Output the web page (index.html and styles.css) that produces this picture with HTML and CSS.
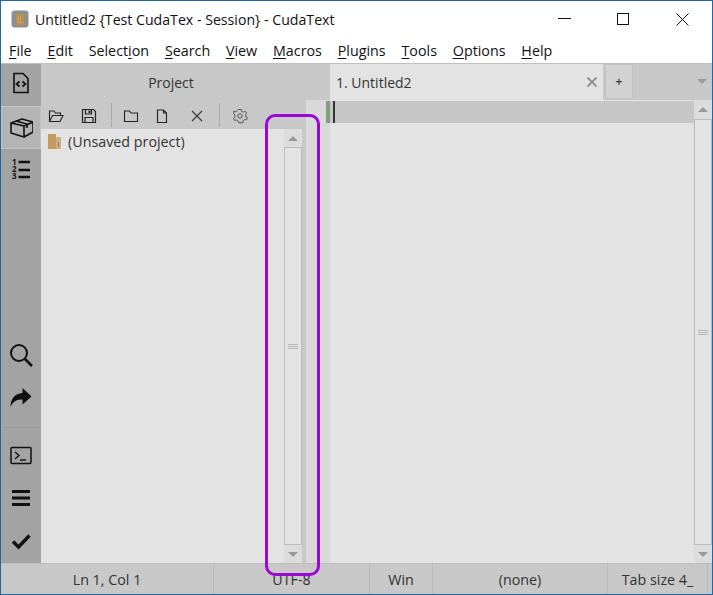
FILE: index.html
```
<!DOCTYPE html>
<html lang="en">
<head>
<meta charset="utf-8">
<title>CudaText</title>
<link rel="stylesheet" href="styles.css">
</head>
<body>
<div class="window">
  <header class="titlebar">
    <svg class="app-icon" width="18" height="18" viewBox="0 0 18 18"><rect x="0.5" y="0.5" width="17" height="17" rx="3" fill="#8f8f8f"/><rect x="5.500" y="4.500" width="7" height="10" fill="#a89170" stroke="#c8912f"/><path d="M7.500 6v6.500h3.500M9.500 6v4.500" fill="none" stroke="#e2a336"/></svg>
    <span class="title-text">Untitled2 {Test CudaTex - Session} - CudaText</span>
    <div class="win-controls">
      <button class="win-btn"><svg width="13" height="13" viewBox="0 0 13 13"><path d="M0 5.500h13" stroke="#111" fill="none"/></svg></button>
      <button class="win-btn"><svg width="13" height="13" viewBox="0 0 13 13"><rect x="0.500" y="0.500" width="11" height="11" stroke="#111" fill="none"/></svg></button>
      <button class="win-btn"><svg width="13" height="13" viewBox="0 0 13 13"><path d="M0.500 0.500l12 12M12.500 0.500l-12 12" stroke="#111" fill="none"/></svg></button>
    </div>
  </header>
  <nav class="menubar">
    <span class="menu-item"><u>F</u>ile</span>
    <span class="menu-item"><u>E</u>dit</span>
    <span class="menu-item">Select<u>i</u>on</span>
    <span class="menu-item"><u>S</u>earch</span>
    <span class="menu-item"><u>V</u>iew</span>
    <span class="menu-item"><u>M</u>acros</span>
    <span class="menu-item"><u>P</u>lugins</span>
    <span class="menu-item"><u>T</u>ools</span>
    <span class="menu-item"><u>O</u>ptions</span>
    <span class="menu-item"><u>H</u>elp</span>
  </nav>
  <main class="workspace">
    <aside class="sidebar">
      <div class="side-btn first"><svg width="24" height="24" viewBox="0 0 18 24"><path d="M2 2.500h9l5 5v14H2z" fill="none" stroke="#111" stroke-width="1.600"/><path d="M7.500 10.500L4.500 13l3 2.500M10.500 10.500l3 2.500-3 2.500" fill="none" stroke="#111" stroke-width="1.700"/></svg></div>
      <div class="side-btn active"><svg width="24" height="24" viewBox="0 0 24 24"><path d="M2 7l11-4 11 3-9 4z M2 7v10l13 4 9-5V6 M15 10v11" fill="none" stroke="#111" stroke-width="1.600" stroke-linejoin="round"/><path d="M7 5l11 3v4" fill="none" stroke="#111" stroke-width="1.600"/></svg></div>
      <div class="side-btn third"><svg width="24" height="24" viewBox="0 0 24 24"><text class="num" x="3" y="7.500">1</text><text class="num" x="3" y="14.800">2</text><text class="num" x="3" y="22">3</text><path d="M9.500 5h11.500M9.500 13h11.500M9.500 20h11.500" stroke="#111" stroke-width="2.600"/></svg></div>
      <div class="side-spacer"></div>
      <div class="side-btn"><svg width="24" height="24" viewBox="0 0 24 24"><circle cx="10" cy="10" r="8" fill="none" stroke="#111" stroke-width="2"/><path d="M16 16l7 7" stroke="#111" stroke-width="2.600"/></svg></div>
      <div class="side-btn lift"><svg width="24" height="24" viewBox="0 0 24 24"><path d="M13.500 3l9 8.500-9 8v-5C8 14.500 4 16 1.500 22c0-8 4-13.500 12-14z" fill="#111"/></svg></div>
      <div class="side-sep"></div>
      <div class="side-btn"><svg width="24" height="24" viewBox="0 0 24 20"><rect x="2" y="1.500" width="20" height="16" rx="1" fill="none" stroke="#111" stroke-width="1.500"/><path d="M6 6l4 3.500-4 3.500" fill="none" stroke="#111" stroke-width="1.400"/><path d="M11 14h6" stroke="#111" stroke-width="1.400"/></svg></div>
      <div class="side-btn lift"><svg width="24" height="24" viewBox="0 0 24 24"><path d="M3 5.500h18M3 12h18M3 18.500h18" stroke="#111" stroke-width="2.800"/></svg></div>
      <div class="side-btn lift"><svg width="24" height="24" viewBox="0 0 24 24"><path d="M4 12.500l5.500 5.500L20.500 6.500" fill="none" stroke="#111" stroke-width="3.400"/></svg></div>
    </aside>
    <section class="project">
      <div class="project-head">Project</div>
      <div class="project-tools">
        <span class="tool"><svg width="16" height="16" viewBox="0 0 16 16"><path d="M1.500 13.500V3h4.500l1.500 2h5v2.500M1.500 13.500h10.500l3-6H4.500z" fill="none" stroke="#222" stroke-width="1.100"/></svg></span>
        <span class="tool"><svg width="16" height="16" viewBox="0 0 16 16"><path d="M1.500 1.500h11l2 2v11h-13z" fill="none" stroke="#222" stroke-width="1.200"/><path d="M4.500 2v4h6V2M4 14.500V9.500h8v5" fill="none" stroke="#222" stroke-width="1.200"/><rect x="7.500" y="2.500" width="2" height="2.500" fill="#222"/></svg></span>
        <span class="tool-sep"></span>
        <span class="tool"><svg width="16" height="16" viewBox="0 0 16 16"><path d="M1.500 13.500V3h5l1.500 2h6.500v8.500z" fill="none" stroke="#222" stroke-width="1.100"/></svg></span>
        <span class="tool"><svg width="16" height="16" viewBox="0 0 16 16"><path d="M3.500 2h6l3 3v9.500h-9z M9.500 2v3h3" fill="none" stroke="#222" stroke-width="1.100"/></svg></span>
        <span class="tool"><svg width="16" height="16" viewBox="0 0 16 16"><path d="M3 3l10 10M13 3L3 13" fill="none" stroke="#333" stroke-width="1.100"/></svg></span>
        <span class="tool-sep"></span>
        <span class="tool"><svg width="16" height="16" viewBox="0 0 16 16"><circle cx="8" cy="8" r="2.200" fill="none" stroke="#555"/><path d="M6.700 1.500h2.600l.4 2 1.500.7 1.800-1 1.700 2-1.200 1.700.2 1.700 1.700 1-1 2.300-2-.3-1.300 1.200-.2 2H6.700l-.6-2-1.400-.9-2 .6-1.200-2.200 1.500-1.400V7l-1.500-1.500L1.700 3.300l2 .5 1.500-.9z" fill="none" stroke="#555"/></svg></span>
      </div>
      <div class="project-body">
        <div class="tree">
          <div class="tree-row">
            <svg width="13" height="15" viewBox="0 0 13 15"><rect x="0" y="0" width="8" height="15" fill="#c49a5c"/><rect x="8" y="3" width="5" height="12" fill="#cbb088"/><path d="M10.500 8v5" stroke="#9a7a48"/></svg>
            <span>(Unsaved project)</span>
          </div>
        </div>
        <div class="scrollbar">
          <div class="sb-btn"><span class="arrow up"></span></div>
          <div class="sb-thumb"><span class="grip"></span></div>
          <div class="sb-btn"><span class="arrow down"></span></div>
        </div>
        <div class="splitter"></div>
      </div>
    </section>
    <section class="editor">
      <div class="tabbar">
        <div class="tab-gap"></div>
        <div class="tab"><span>1. Untitled2</span><svg class="tab-close" width="10" height="10" viewBox="0 0 10 10"><path d="M0.500 0.500l9 9M9.500 0.500l-9 9" stroke="#8c8c8c" stroke-width="1.800"/></svg></div>
        <div class="tab-add">+</div>
        <div class="tab-fill"><span class="arrow down"></span></div>
      </div>
      <div class="edit-area">
        <div class="gutter"><span class="gutter-mark"></span></div>
        <div class="text-area"><div class="current-line"><span class="caret"></span></div></div>
        <div class="scrollbar">
          <div class="sb-btn tall"><span class="arrow up"></span></div>
          <div class="sb-thumb"><span class="grip"></span></div>
          <div class="sb-btn"><span class="arrow down"></span></div>
        </div>
      </div>
    </section>
  </main>
  <footer class="statusbar">
    <div class="cell c1">Ln 1, Col 1</div>
    <div class="cell c2">UTF-8</div>
    <div class="cell c3">Win</div>
    <div class="cell c4">(none)</div>
    <div class="cell c5">Tab size 4_</div>
  </footer>
  <div class="highlight"></div>
</div>
</body>
</html>
```
FILE: styles.css
```
* { box-sizing: border-box; }
html, body { margin: 0; padding: 0; }
body { width: 713px; height: 595px; overflow: hidden; font-family: "Open Sans", "Noto Sans", sans-serif; color: #1c1c1c; }
.window { position: relative; width: 713px; height: 595px; display: flex; flex-direction: column; background: #fff; border: 1px solid #1c69a6; }
.titlebar { height: 38px; flex: none; display: flex; align-items: center; padding: 0 0 2px 10px; font-size: 14.150px; color: #111; }
.app-icon { flex: none; margin-right: 6px; }
.title-text { white-space: nowrap; }
.win-controls { margin-left: auto; display: flex; height: 100%; }
.win-btn { width: 59px; border: 0; padding: 0; background: none; display: flex; align-items: center; justify-content: center; }
.menubar { height: 24px; flex: none; display: flex; align-items: center; gap: 15.800px; padding: 0 0 2px 8px; font-size: 14.300px; color: #111; background: #fff; }
.menu-item { white-space: nowrap; }
.menu-item u { text-underline-offset: 2px; }
.workspace { flex: 1; min-height: 0; display: flex; border-top: 1px solid #c0c0c0; }
.sidebar { width: 40px; flex: none; display: flex; flex-direction: column; background: #a3a3a3; }
.side-btn { height: 43px; flex: none; display: flex; align-items: center; justify-content: center; }
.side-btn.first { height: 42px; padding-bottom: 4px; }
.side-btn.third { padding-bottom: 3px; }
.side-btn.lift { padding-bottom: 2px; }
.side-btn.active { background: #b4b4b4; border: 1px solid #c2c2c2; }
.num { font-size: 8px; font-weight: 700; fill: #111; }
.side-spacer { flex: 1; }
.side-sep { height: 15px; flex: none; background: linear-gradient(#999, #999) no-repeat 2px 8px / 36px 1px; }
.project { width: 265px; flex: none; display: flex; flex-direction: column; background: #c8c8c8; }
.project-head { height: 36px; flex: none; display: flex; align-items: center; justify-content: center; font-size: 14px; color: #333; padding-right: 5px; }
.project-tools { height: 29px; flex: none; display: flex; align-items: center; padding-left: 7px; }
.tool { width: 16px; height: 16px; flex: none; }
.tool:nth-child(2) { margin-left: 17px; }
.tool:nth-child(4) { margin-left: 11px; }
.tool:nth-child(5) { margin-left: 15px; }
.tool:nth-child(6) { margin-left: 19px; }
.tool:nth-child(8) { margin-left: 12px; }
.tool-sep { width: 1px; height: 24px; margin-left: 14px; background: #a8a8a8; flex: none; }
.project-body { flex: 1; min-height: 0; display: flex; }
.tree { flex: 1; background: #e3e3e3; padding: 4px 0 0 7px; }
.tree-row { display: flex; align-items: center; gap: 7px; font-size: 14.300px; color: #333; height: 16px; }
.scrollbar { width: 18px; flex: none; display: flex; flex-direction: column; background: #e3e3e3; }
.sb-btn { height: 18px; flex: none; display: flex; align-items: center; justify-content: center; background: #dcdcdc; }
.sb-btn.tall { height: 19px; }
.sb-thumb { flex: 1; display: flex; align-items: center; justify-content: center; background: #e3e3e3; border: 1px solid #bcbcbc; }
.grip { width: 10px; height: 5px; border-top: 1px solid #b8b8b8; border-bottom: 1px solid #b8b8b8; background: linear-gradient(#b8b8b8, #b8b8b8) no-repeat 0 1px / 10px 1px; }
.arrow { width: 0; height: 0; border-left: 5px solid transparent; border-right: 5px solid transparent; }
.arrow.up { border-bottom: 5px solid #999; }
.arrow.down { border-top: 5px solid #999; }
.splitter { width: 4px; flex: none; background: #c8c8c8; }
.editor { flex: 1; min-width: 0; display: flex; flex-direction: column; }
.tabbar { height: 36px; flex: none; display: flex; background: #c8c8c8; }
.tab-gap { width: 24px; flex: none; }
.tab { width: 273px; flex: none; display: flex; align-items: center; justify-content: space-between; padding: 1px 6px 0; background: #e3e3e3; font-size: 14px; color: #333; }
.tab-close { margin-bottom: 1px; }
.tab-add { width: 28px; height: 35px; margin-left: 2px; flex: none; display: flex; align-items: center; justify-content: center; background: #d2d2d2; border: 1px solid #c0c0c0; font-size: 12px; color: #333; font-weight: 600; }
.tab-fill { flex: 1; display: flex; align-items: center; justify-content: flex-end; padding: 0 5px 2px 0; }
.edit-area { flex: 1; min-height: 0; display: flex; }
.gutter { width: 24px; flex: none; background: #d9d9d9; display: flex; justify-content: flex-end; }
.gutter-mark { width: 4px; height: 22px; background: #7f9f7f; margin-top: 1px; }
.text-area { flex: 1; min-width: 0; background: #e3e3e3; padding-top: 1px; }
.current-line { height: 22px; background: #c6c6c6; padding-left: 3px; }
.caret { display: block; width: 2px; height: 22px; background: #333; }
.statusbar { height: 31px; flex: none; display: flex; background: #c8c8c8; border-top: 1px solid #bdbdbd; font-size: 14.300px; color: #333; }
.cell { display: flex; align-items: center; justify-content: center; border-right: 1px solid #bbb; }
.c1 { width: 213px; }
.c2 { width: 156px; }
.c3 { width: 63px; }
.c4 { width: 175px; }
.c5 { width: 100px; }
.highlight { position: absolute; left: 264px; top: 113px; width: 55px; height: 462px; border: 3px solid #9a06d6; border-radius: 10px; }
```
